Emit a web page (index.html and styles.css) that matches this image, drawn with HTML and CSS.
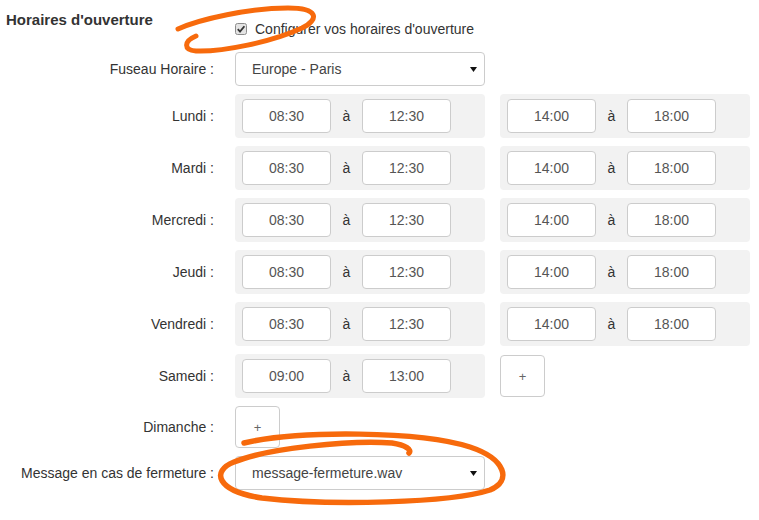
FILE: index.html
```html
<!DOCTYPE html>
<html lang="fr">
<head>
<meta charset="utf-8">
<title>Horaires d'ouverture</title>
<link rel="stylesheet" href="styles.css">
</head>
<body>
<div class="page">
  <div class="form">
    <div class="row head">
      <h3 class="title">Horaires d'ouverture</h3>
      <label class="check">
        <svg class="box" width="12" height="12" viewBox="0 0 12 12"><rect x="0.5" y="0.5" width="11" height="11" rx="2" fill="#e4e4e4" stroke="#8c8c8c"/><path d="M2.8 6.2 L5 8.6 L9.4 3.2" fill="none" stroke="#333" stroke-width="1.8"/></svg>
        <span>Configurer vos horaires d'ouverture</span>
      </label>
    </div>

    <div class="row">
      <div class="label">Fuseau Horaire :</div>
      <div class="select"><span>Europe - Paris</span><svg class="caret" width="7" height="5" viewBox="0 0 7 5"><path d="M0 0 H7 L3.5 5 Z" fill="#111"/></svg></div>
    </div>

    <div class="row">
      <div class="label">Lundi :</div>
      <div class="ranges">
        <div class="panel"><div class="time">08:30</div><div class="sep">à</div><div class="time">12:30</div></div>
        <div class="panel"><div class="time">14:00</div><div class="sep">à</div><div class="time">18:00</div></div>
      </div>
    </div>

    <div class="row">
      <div class="label">Mardi :</div>
      <div class="ranges">
        <div class="panel"><div class="time">08:30</div><div class="sep">à</div><div class="time">12:30</div></div>
        <div class="panel"><div class="time">14:00</div><div class="sep">à</div><div class="time">18:00</div></div>
      </div>
    </div>

    <div class="row">
      <div class="label">Mercredi :</div>
      <div class="ranges">
        <div class="panel"><div class="time">08:30</div><div class="sep">à</div><div class="time">12:30</div></div>
        <div class="panel"><div class="time">14:00</div><div class="sep">à</div><div class="time">18:00</div></div>
      </div>
    </div>

    <div class="row">
      <div class="label">Jeudi :</div>
      <div class="ranges">
        <div class="panel"><div class="time">08:30</div><div class="sep">à</div><div class="time">12:30</div></div>
        <div class="panel"><div class="time">14:00</div><div class="sep">à</div><div class="time">18:00</div></div>
      </div>
    </div>

    <div class="row">
      <div class="label">Vendredi :</div>
      <div class="ranges">
        <div class="panel"><div class="time">08:30</div><div class="sep">à</div><div class="time">12:30</div></div>
        <div class="panel"><div class="time">14:00</div><div class="sep">à</div><div class="time">18:00</div></div>
      </div>
    </div>

    <div class="row">
      <div class="label">Samedi :</div>
      <div class="ranges">
        <div class="panel"><div class="time">09:00</div><div class="sep">à</div><div class="time">13:00</div></div>
        <div class="plus">+</div>
      </div>
    </div>

    <div class="row">
      <div class="label">Dimanche :</div>
      <div class="ranges">
        <div class="plus">+</div>
      </div>
    </div>

    <div class="row">
      <div class="label">Message en cas de fermeture :</div>
      <div class="select"><span>message-fermeture.wav</span><svg class="caret" width="7" height="5" viewBox="0 0 7 5"><path d="M0 0 H7 L3.5 5 Z" fill="#111"/></svg></div>
    </div>
  </div>

  <svg class="marks" width="759" height="520" viewBox="0 0 759 520">
    <path d="M178 29 C200 19 250 8 288 8 C318 8 320 19 302 28 C272 42 222 52 196 51 C183 50 184 41 196 36" fill="none" stroke="#f76a0c" stroke-width="5" stroke-linecap="round"/>
    <path d="M244 443 C300 430 420 431 470 447 C506 459 512 481 490 490 C450 503 330 506 262 498 C216 491 211 471 234 462 C268 448 350 440 392 443 C406 445 412 450 409 453" fill="none" stroke="#f76a0c" stroke-width="5.5" stroke-linecap="round"/>
  </svg>
</div>
</body>
</html>
```
FILE: styles.css
```css
* { box-sizing: border-box; }
html, body { margin: 0; padding: 0; background: #fff; }
body {
  font-family: "Liberation Sans", Arial, sans-serif;
  font-size: 14px;
  color: #333;
}
.page {
  position: relative;
  width: 759px;
  height: 520px;
  overflow: hidden;
}
.form {
  padding-top: 10px;
}
.row {
  display: grid;
  grid-template-columns: 214px auto;
  column-gap: 21px;
  align-items: center;
  margin-bottom: 8px;
}
.row.head {
  align-items: start;
  margin-bottom: 13px;
}
.title {
  margin: 0;
  padding-left: 6px;
  font-size: 15px;
  font-weight: bold;
  line-height: 20px;
  white-space: nowrap;
  color: #333;
}
.check {
  display: flex;
  align-items: center;
  height: 20px;
  margin-top: 9px;
  line-height: 20px;
}
.check .box { display: block; margin-right: 8px; }
.label {
  text-align: right;
  line-height: 20px;
  white-space: nowrap;
}
.select {
  width: 250px;
  height: 34px;
  border: 1px solid #ccc;
  border-radius: 4px;
  background: #fff;
  display: flex;
  align-items: center;
  justify-content: space-between;
  padding: 0 7px 0 16px;
  color: #444;
}
.caret { display: block; }
.ranges {
  display: flex;
  align-items: center;
  gap: 15px;
}
.panel {
  width: 250px;
  height: 44px;
  padding: 5px 7px;
  background: #f2f2f2;
  border-radius: 4px;
  display: flex;
  align-items: center;
}
.time {
  width: 89px;
  height: 34px;
  border: 1px solid #ccc;
  border-radius: 4px;
  background: #fff;
  display: flex;
  align-items: center;
  justify-content: center;
  color: #555;
}
.sep {
  width: 31px;
  text-align: center;
  color: #333;
}
.plus {
  width: 45px;
  height: 42px;
  border: 1px solid #ccc;
  border-radius: 4px;
  background: #fff;
  display: flex;
  align-items: center;
  justify-content: center;
  color: #666;
  font-size: 13px;
}
.marks {
  position: absolute;
  left: 0;
  top: 0;
  pointer-events: none;
}
```
